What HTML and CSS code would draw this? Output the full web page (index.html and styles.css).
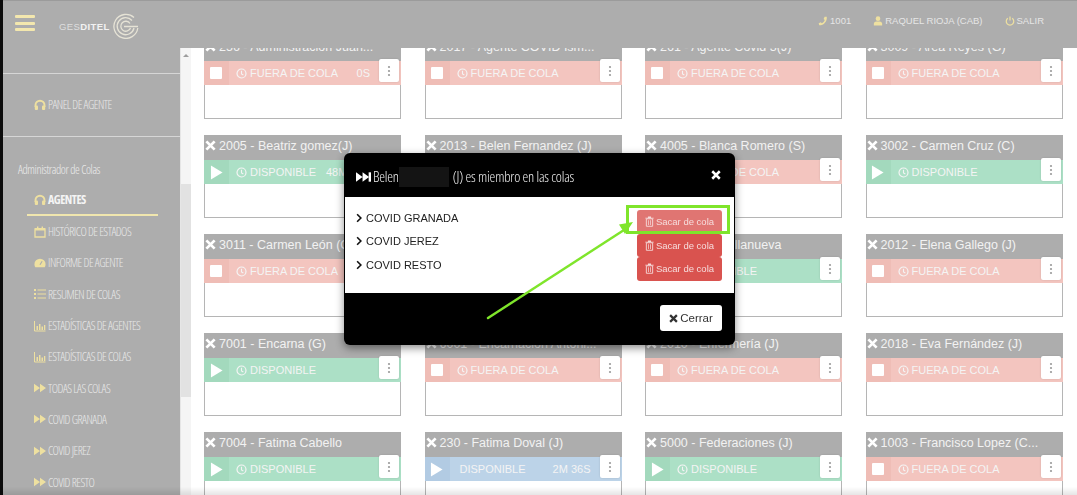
FILE: index.html
```html
<!DOCTYPE html>
<html lang="en">
<head>
  <meta charset="UTF-8">
  <meta name="viewport" content="width=device-width, initial-scale=1">
  <title>Gesditel - Agentes</title>
  <link rel="stylesheet" href="styles.css">
</head>
<body>
  <!-- Icons -->
  <svg class="sprite" width="0" height="0">
    <symbol id="i-x" viewBox="0 0 12 12"><path d="M1.500 1.500l9 9M10.500 1.500l-9 9" fill="none" stroke="currentColor" stroke-width="3"/></symbol>
    <symbol id="i-play" viewBox="0 0 14 16"><path d="M1 0.500L13.500 8 1 15.500z" fill="currentColor"/></symbol>
    <symbol id="i-stop" viewBox="0 0 12 12"><rect width="12" height="12" rx="1" fill="currentColor"/></symbol>
    <symbol id="i-clock" viewBox="0 0 12 12"><circle cx="6" cy="6" r="4.900" fill="none" stroke="currentColor" stroke-width="1.300"/><path d="M6 3v3.400l2 1.200" fill="none" stroke="currentColor" stroke-width="1.200"/></symbol>
    <symbol id="i-dots" viewBox="0 0 4 12"><circle cx="2" cy="2" r="1.100" fill="currentColor"/><circle cx="2" cy="6" r="1.100" fill="currentColor"/><circle cx="2" cy="10" r="1.100" fill="currentColor"/></symbol>
    <symbol id="i-head" viewBox="0 0 12 12"><path d="M1.500 8V6.200a4.500 4.500 0 0 1 9 0V8" fill="none" stroke="currentColor" stroke-width="1.900"/><rect x="0.800" y="6.600" width="3.200" height="4.400" rx="1" fill="currentColor"/><rect x="8" y="6.600" width="3.200" height="4.400" rx="1" fill="currentColor"/></symbol>
    <symbol id="i-cal" viewBox="0 0 12 12"><path d="M1 3h10v8H1z" fill="none" stroke="currentColor" stroke-width="1.300"/><path d="M1 2h10v2.500H1zM3 .5h1.400V2H3zM7.600 .5H9V2H7.600z" fill="currentColor"/></symbol>
    <symbol id="i-gauge" viewBox="0 0 14 12"><path d="M7 1a6.500 6.500 0 0 0-6.500 6.500c0 1.400.4 2.600 1 3.500h11c.6-.9 1-2.100 1-3.500A6.500 6.500 0 0 0 7 1z" fill="currentColor"/><path d="M7 8l2.500-4" stroke="#adadad" stroke-width="1.300"/></symbol>
    <symbol id="i-list" viewBox="0 0 12 12"><path d="M0 1h2v2H0zM0 5h2v2H0zM0 9h2v2H0z" fill="currentColor"/><path d="M3.500 1.400H12v1.200H3.500zM3.500 5.400H12v1.200H3.500zM3.500 9.400H12v1.200H3.500z" fill="currentColor"/></symbol>
    <symbol id="i-chart" viewBox="0 0 12 12"><path d="M.5 1v10h11" fill="none" stroke="currentColor" stroke-width="1"/><path d="M2.500 6h1.500v4H2.500zM5 4h1.500v6H5zM7.500 6.500H9V10H7.500zM10 5h1.300v5H10z" fill="currentColor"/></symbol>
    <symbol id="i-ff" viewBox="0 0 14 10"><path d="M0 0l7 5-7 5zM7 0l7 5-7 5z" fill="currentColor"/></symbol>
    <symbol id="i-next" viewBox="0 0 16 10"><path d="M0 0l7 5-7 5zM7 0l7 5-7 5z" fill="currentColor"/><path d="M13.500 0H16v10h-2.500z" fill="currentColor"/></symbol>
    <symbol id="i-phone" viewBox="0 0 12 12"><path d="M10.500 .8c.8 5.500-3.500 10.400-9 10.400L.8 8.800l2.600-1.300 1.100 1.300c1.600-.8 3-2.400 3.600-4L6.700 3.600 8 1z" fill="currentColor"/></symbol>
    <symbol id="i-user" viewBox="0 0 12 12"><circle cx="6" cy="3.200" r="2.800" fill="currentColor"/><path d="M1 11.500V9a3 3 0 0 1 3-2.500h4A3 3 0 0 1 11 9v2.500z" fill="currentColor"/></symbol>
    <symbol id="i-power" viewBox="0 0 12 12"><path d="M3.400 2.800a4.500 4.500 0 1 0 5.200 0" fill="none" stroke="currentColor" stroke-width="1.500"/><path d="M6 .5v5" stroke="currentColor" stroke-width="1.500"/></symbol>
    <symbol id="i-trash" viewBox="0 0 10 12"><path d="M1.500 3h7v8.300h-7z" fill="none" stroke="currentColor" stroke-width="1"/><path d="M.3 1.800h9.400v1H.3zM3.300.5h3.400v1.300H3.300zM3.500 4.500h.8v5.300h-.8zM5.700 4.500h.8v5.300h-.8z" fill="currentColor"/></symbol>
    <symbol id="i-chev" viewBox="0 0 8 12"><path d="M1.500 1l5 5-5 5" fill="none" stroke="currentColor" stroke-width="2.200"/></symbol>
  </svg>

  <header class="topbar">
    <div class="menu-btn"><span></span><span></span><span></span></div>
    <div class="logo">
      <span class="logo-text">GES<b>DITEL</b></span>
      <svg class="logo-mark" viewBox="0 0 26 26" width="26" height="26">
        <path d="M21 4.500A12 12 0 1 0 24.800 15" fill="none" stroke="#e6e3d6" stroke-width="1.300"/>
        <path d="M19 7.500A8.500 8.500 0 1 0 21 15" fill="none" stroke="#e6e3d6" stroke-width="1.300"/>
        <path d="M17 10.500A5 5 0 1 0 17.500 15M11 13.500h14" fill="none" stroke="#e6e3d6" stroke-width="1.300"/>
      </svg>
    </div>
    <nav class="user-nav">
      <span><svg class="icon"><use href="#i-phone"/></svg>1001</span>
      <span><svg class="icon"><use href="#i-user"/></svg>RAQUEL RIOJA (CAB)</span>
      <span><svg class="icon"><use href="#i-power"/></svg>SALIR</span>
    </nav>
  </header>

  <div class="layout">
    <aside class="sidebar">
      <div class="side-block">
        <a class="side-link"><svg class="icon"><use href="#i-head"/></svg>PANEL DE AGENTE</a>
      </div>
      <div class="side-title">Administrador de Colas</div>
      <a class="side-link active"><svg class="icon"><use href="#i-head"/></svg>AGENTES</a>
      <a class="side-link"><svg class="icon"><use href="#i-cal"/></svg>HISTÓRICO DE ESTADOS</a>
      <a class="side-link"><svg class="icon"><use href="#i-gauge"/></svg>INFORME DE AGENTE</a>
      <a class="side-link"><svg class="icon"><use href="#i-list"/></svg>RESUMEN DE COLAS</a>
      <a class="side-link"><svg class="icon"><use href="#i-chart"/></svg>ESTADÍSTICAS DE AGENTES</a>
      <a class="side-link"><svg class="icon"><use href="#i-chart"/></svg>ESTADÍSTICAS DE COLAS</a>
      <a class="side-link"><svg class="icon"><use href="#i-ff"/></svg>TODAS LAS COLAS</a>
      <a class="side-link"><svg class="icon"><use href="#i-ff"/></svg>COVID GRANADA</a>
      <a class="side-link"><svg class="icon"><use href="#i-ff"/></svg>COVID JEREZ</a>
      <a class="side-link"><svg class="icon"><use href="#i-ff"/></svg>COVID RESTO</a>
    </aside>

    <div class="scrollbar"><span class="scroll-arrow"></span><span class="scroll-thumb"></span></div>

    <main class="content">
      <div class="agents">

        <div class="card">
          <div class="card-title"><svg class="x"><use href="#i-x"/></svg>256 - Administracion Juan...</div>
          <div class="status out"><span class="st-btn"><svg class="st-stop"><use href="#i-stop"/></svg></span><span class="st-label"><svg class="clock"><use href="#i-clock"/></svg>FUERA DE COLA</span><span class="st-time">0S</span><span class="dots"><svg><use href="#i-dots"/></svg></span></div>
        </div>
        <div class="card">
          <div class="card-title"><svg class="x"><use href="#i-x"/></svg>2017 - Agente COVID Ism...</div>
          <div class="status out"><span class="st-btn"><svg class="st-stop"><use href="#i-stop"/></svg></span><span class="st-label"><svg class="clock"><use href="#i-clock"/></svg>FUERA DE COLA</span><span class="dots"><svg><use href="#i-dots"/></svg></span></div>
        </div>
        <div class="card">
          <div class="card-title"><svg class="x"><use href="#i-x"/></svg>261 - Agente Covid 3(J)</div>
          <div class="status out"><span class="st-btn"><svg class="st-stop"><use href="#i-stop"/></svg></span><span class="st-label"><svg class="clock"><use href="#i-clock"/></svg>FUERA DE COLA</span><span class="dots"><svg><use href="#i-dots"/></svg></span></div>
        </div>
        <div class="card">
          <div class="card-title"><svg class="x"><use href="#i-x"/></svg>3009 - Area Reyes (G)</div>
          <div class="status out"><span class="st-btn"><svg class="st-stop"><use href="#i-stop"/></svg></span><span class="st-label"><svg class="clock"><use href="#i-clock"/></svg>FUERA DE COLA</span><span class="dots"><svg><use href="#i-dots"/></svg></span></div>
        </div>

        <div class="card">
          <div class="card-title"><svg class="x"><use href="#i-x"/></svg>2005 - Beatriz gomez(J)</div>
          <div class="status free"><span class="st-btn"><svg class="st-play"><use href="#i-play"/></svg></span><span class="st-label"><svg class="clock"><use href="#i-clock"/></svg>DISPONIBLE</span><span class="st-time">48M 12S</span><span class="dots"><svg><use href="#i-dots"/></svg></span></div>
        </div>
        <div class="card">
          <div class="card-title"><svg class="x"><use href="#i-x"/></svg>2013 - Belen Fernandez (J)</div>
          <div class="status out"><span class="st-btn"><svg class="st-stop"><use href="#i-stop"/></svg></span><span class="st-label"><svg class="clock"><use href="#i-clock"/></svg>FUERA DE COLA</span><span class="dots"><svg><use href="#i-dots"/></svg></span></div>
        </div>
        <div class="card">
          <div class="card-title"><svg class="x"><use href="#i-x"/></svg>4005 - Blanca Romero (S)</div>
          <div class="status out"><span class="st-btn"><svg class="st-stop"><use href="#i-stop"/></svg></span><span class="st-label"><svg class="clock"><use href="#i-clock"/></svg>FUERA DE COLA</span><span class="dots"><svg><use href="#i-dots"/></svg></span></div>
        </div>
        <div class="card">
          <div class="card-title"><svg class="x"><use href="#i-x"/></svg>3002 - Carmen Cruz (C)</div>
          <div class="status free"><span class="st-btn"><svg class="st-play"><use href="#i-play"/></svg></span><span class="st-label"><svg class="clock"><use href="#i-clock"/></svg>DISPONIBLE</span><span class="dots"><svg><use href="#i-dots"/></svg></span></div>
        </div>

        <div class="card">
          <div class="card-title"><svg class="x"><use href="#i-x"/></svg>3011 - Carmen León (C)</div>
          <div class="status out"><span class="st-btn"><svg class="st-stop"><use href="#i-stop"/></svg></span><span class="st-label"><svg class="clock"><use href="#i-clock"/></svg>FUERA DE COLA</span><span class="dots"><svg><use href="#i-dots"/></svg></span></div>
        </div>
        <div class="card">
          <div class="card-title"><svg class="x"><use href="#i-x"/></svg>2014 - Carolina Ruiz (J)</div>
          <div class="status out"><span class="st-btn"><svg class="st-stop"><use href="#i-stop"/></svg></span><span class="st-label"><svg class="clock"><use href="#i-clock"/></svg>FUERA DE COLA</span><span class="dots"><svg><use href="#i-dots"/></svg></span></div>
        </div>
        <div class="card">
          <div class="card-title"><svg class="x"><use href="#i-x"/></svg>4010 - Eva Villanueva</div>
          <div class="status free"><span class="st-btn"><svg class="st-play"><use href="#i-play"/></svg></span><span class="st-label"><svg class="clock"><use href="#i-clock"/></svg>DISPONIBLE</span><span class="dots"><svg><use href="#i-dots"/></svg></span></div>
        </div>
        <div class="card">
          <div class="card-title"><svg class="x"><use href="#i-x"/></svg>2012 - Elena Gallego (J)</div>
          <div class="status out"><span class="st-btn"><svg class="st-stop"><use href="#i-stop"/></svg></span><span class="st-label"><svg class="clock"><use href="#i-clock"/></svg>FUERA DE COLA</span><span class="dots"><svg><use href="#i-dots"/></svg></span></div>
        </div>

        <div class="card">
          <div class="card-title"><svg class="x"><use href="#i-x"/></svg>7001 - Encarna (G)</div>
          <div class="status free"><span class="st-btn"><svg class="st-play"><use href="#i-play"/></svg></span><span class="st-label"><svg class="clock"><use href="#i-clock"/></svg>DISPONIBLE</span><span class="dots"><svg><use href="#i-dots"/></svg></span></div>
        </div>
        <div class="card">
          <div class="card-title"><svg class="x"><use href="#i-x"/></svg>6001 - Encarnación Antoni...</div>
          <div class="status out"><span class="st-btn"><svg class="st-stop"><use href="#i-stop"/></svg></span><span class="st-label"><svg class="clock"><use href="#i-clock"/></svg>FUERA DE COLA</span><span class="dots"><svg><use href="#i-dots"/></svg></span></div>
        </div>
        <div class="card">
          <div class="card-title"><svg class="x"><use href="#i-x"/></svg>2010 - Enfermería (J)</div>
          <div class="status out"><span class="st-btn"><svg class="st-stop"><use href="#i-stop"/></svg></span><span class="st-label"><svg class="clock"><use href="#i-clock"/></svg>FUERA DE COLA</span><span class="dots"><svg><use href="#i-dots"/></svg></span></div>
        </div>
        <div class="card">
          <div class="card-title"><svg class="x"><use href="#i-x"/></svg>2018 - Eva Fernández (J)</div>
          <div class="status out"><span class="st-btn"><svg class="st-stop"><use href="#i-stop"/></svg></span><span class="st-label"><svg class="clock"><use href="#i-clock"/></svg>FUERA DE COLA</span><span class="dots"><svg><use href="#i-dots"/></svg></span></div>
        </div>

        <div class="card">
          <div class="card-title"><svg class="x"><use href="#i-x"/></svg>7004 - Fatima Cabello</div>
          <div class="status free"><span class="st-btn"><svg class="st-play"><use href="#i-play"/></svg></span><span class="st-label"><svg class="clock"><use href="#i-clock"/></svg>DISPONIBLE</span><span class="dots"><svg><use href="#i-dots"/></svg></span></div>
        </div>
        <div class="card">
          <div class="card-title"><svg class="x"><use href="#i-x"/></svg>230 - Fatima Doval (J)</div>
          <div class="status busy"><span class="st-btn"><svg class="st-play"><use href="#i-play"/></svg></span><span class="st-label no-clock">DISPONIBLE</span><span class="st-time">2M 36S</span><span class="dots"><svg><use href="#i-dots"/></svg></span></div>
        </div>
        <div class="card">
          <div class="card-title"><svg class="x"><use href="#i-x"/></svg>5000 - Federaciones (J)</div>
          <div class="status free"><span class="st-btn"><svg class="st-play"><use href="#i-play"/></svg></span><span class="st-label"><svg class="clock"><use href="#i-clock"/></svg>DISPONIBLE</span><span class="dots"><svg><use href="#i-dots"/></svg></span></div>
        </div>
        <div class="card">
          <div class="card-title"><svg class="x"><use href="#i-x"/></svg>1003 - Francisco Lopez (C...</div>
          <div class="status out"><span class="st-btn"><svg class="st-stop"><use href="#i-stop"/></svg></span><span class="st-label"><svg class="clock"><use href="#i-clock"/></svg>FUERA DE COLA</span><span class="dots"><svg><use href="#i-dots"/></svg></span></div>
        </div>

      </div>
    </main>
  </div>
  <div class="bottom-fade"></div>

  <!-- Queue modal -->
  <div class="modal">
    <div class="modal-head">
      <svg class="next"><use href="#i-next"/></svg>
      <h4>Belen<span class="censor"></span>(J) es miembro en las colas</h4>
      <svg class="modal-close"><use href="#i-x"/></svg>
    </div>
    <div class="modal-body">
      <ul class="queues">
        <li><svg class="chev"><use href="#i-chev"/></svg>COVID GRANADA</li>
        <li><svg class="chev"><use href="#i-chev"/></svg>COVID JEREZ</li>
        <li><svg class="chev"><use href="#i-chev"/></svg>COVID RESTO</li>
      </ul>
      <div class="queue-actions">
        <button class="btn-remove hover"><svg class="trash"><use href="#i-trash"/></svg>Sacar de cola</button>
        <button class="btn-remove"><svg class="trash"><use href="#i-trash"/></svg>Sacar de cola</button>
        <button class="btn-remove"><svg class="trash"><use href="#i-trash"/></svg>Sacar de cola</button>
      </div>
    </div>
    <div class="modal-foot">
      <button class="btn-close"><svg class="x-dark"><use href="#i-x"/></svg>Cerrar</button>
    </div>
  </div>

  <!-- Annotation on top of the screenshot -->
  <div class="mark-box"></div>
  <svg class="mark-arrow" width="160" height="110" viewBox="0 0 160 110">
    <path d="M3 102L139 14" fill="none" stroke="#7fe52b" stroke-width="2.5" stroke-linecap="round"/>
    <path d="M148 6l-14 2.500 6 9.500z" fill="#7fe52b"/>
  </svg>
</body>
</html>
```

FILE: styles.css
```css
* {
  box-sizing: border-box;
}
body {
  margin: 0;
  height: 495px;
  overflow: hidden;
  font-family: "Liberation Sans", Arial, sans-serif;
  background: #fff;
  border-left: 3px solid #0b0b0b;
  color: #fff;
}
.sprite {
  display: block;
  position: absolute;
}
.icon {
  width: 12px;
  height: 12px;
  color: #eee0a0;
  flex: none;
}

/* Top bar */
.topbar {
  height: 48px;
  display: flex;
  align-items: center;
  background: #adadad;
  border-top: 1px solid #9b9b9b;
  position: relative;
  z-index: 2;
}
.menu-btn {
  width: 20px;
  margin-left: 12px;
  display: flex;
  flex-direction: column;
  gap: 3.5px;
  margin-top: -3px;
}
.menu-btn span {
  height: 3px;
  background: #f3e7ae;
  border-radius: 1px;
}
.logo {
  display: flex;
  align-items: center;
  margin-left: 24px;
  margin-top: 3px;
}
.logo-text {
  font-size: 9.5px;
  letter-spacing: 0.4px;
  color: #dedede;
}
.logo-text b {
  color: #f2f2f2;
}
.logo-mark {
  margin-left: 3px;
}
.user-nav {
  margin-left: auto;
  margin-right: 33px;
  margin-top: -8px;
  display: flex;
  gap: 22px;
  font-size: 9.5px;
  color: #e6e6e6;
}
.user-nav span {
  display: flex;
  align-items: center;
  gap: 2px;
}
.user-nav .icon {
  width: 10px;
  height: 10px;
}

/* Sidebar */
.layout {
  display: flex;
  height: 447px;
}
.sidebar {
  width: 177px;
  background: #adadad;
  padding-top: 25px;
  font-family: "Open Sans", "Liberation Sans", sans-serif;
  font-stretch: 75%;
  font-weight: 300;
  letter-spacing: -0.5px;
  flex: none;
  overflow: hidden;
}
.side-block {
  border-top: 1px solid #d6d6d6;
  border-bottom: 1px solid #d6d6d6;
  height: 64px;
  padding: 23px 0 0 0;
  margin-bottom: 24px;
}
.side-title {
  font-size: 12px;
  letter-spacing: -0.4px;
  color: #ececec;
  margin-left: 15px;
  height: 24px;
}
.side-link {
  display: flex;
  align-items: center;
  gap: 2px;
  height: 31.3px;
  padding-left: 31px;
  font-size: 12px;
  color: #e8e8e8;
  white-space: nowrap;
}
.side-block .side-link {
  height: 15px;
}
.side-link.active {
  font-weight: bold;
  color: #f4f4f4;
  margin-left: 24px;
  padding-left: 7px;
  width: 131px;
  border-bottom: 2px solid #f0e6ae;
  height: 31px;
}

/* Scrollbar */
.scrollbar {
  width: 11px;
  flex: none;
  background: #f5f5f5;
  border-left: 1px solid #e6e6e6;
  position: relative;
}
.scroll-arrow {
  display: block;
  margin: 6px auto 0;
  width: 0;
  border: 3px solid transparent;
  border-top: 0;
  border-bottom: 3px solid #9d9d9d;
}
.scroll-thumb {
  display: block;
  height: 213px;
  margin-top: 127px;
  background: #e2e2e2;
}

/* Agent cards */
.content {
  flex: 1;
  overflow: hidden;
  padding-left: 13px;
}
.agents {
  display: grid;
  grid-template-columns: repeat(4, 197px);
  column-gap: 23.5px;
  row-gap: 16px;
  margin-top: -12px;
}
.card {
  height: 83px;
  border: 1px solid #b5b5b5;
  border-top: 0;
  background: #fff;
}
.card-title {
  height: 25px;
  margin: 0 -1px;
  background: #adadad;
  color: #f2f2f2;
  font-size: 12.5px;
  line-height: 22px;
  padding-left: 1px;
  white-space: nowrap;
  overflow: hidden;
}
.x {
  width: 11px;
  height: 11px;
  margin-right: 3px;
  color: #fff;
  vertical-align: -1px;
}
.status {
  height: 24px;
  display: flex;
  align-items: center;
  position: relative;
  font-size: 11px;
  color: #f4f4f4;
  margin: 0 -1px;
  padding-right: 31px;
}
.status.out {
  background: #f3c5bf;
}
.status.free {
  background: #ace0c6;
}
.status.busy {
  background: #bcd3e8;
}
.st-btn {
  width: 25px;
  height: 24px;
  display: flex;
  align-items: center;
  justify-content: center;
  flex: none;
}
.out .st-btn {
  background: #efbdb6;
}
.free .st-btn {
  background: #a3d9bd;
}
.busy .st-btn {
  background: #b2cbe3;
}
.st-stop {
  width: 12px;
  height: 12px;
  color: #fff;
  margin-left: -1px;
}
.st-play {
  width: 13px;
  height: 15px;
  color: #fff;
  margin-left: -1px;
}
.st-label {
  display: flex;
  align-items: center;
  gap: 3px;
  margin-left: 7px;
  white-space: nowrap;
}
.st-label.no-clock {
  margin-left: 10px;
}
.clock {
  width: 11px;
  height: 11px;
}
.st-time {
  margin-left: auto;
  white-space: nowrap;
}
.dots {
  position: absolute;
  right: 2px;
  top: -2px;
  width: 20px;
  height: 23px;
  background: #fff;
  border-radius: 2px;
  display: flex;
  align-items: center;
  justify-content: center;
  color: #9a9a9a;
  box-shadow: 0 0 2px rgba(0, 0, 0, 0.15);
}
.dots svg {
  width: 4px;
  height: 12px;
}
.bottom-fade {
  position: fixed;
  left: 0;
  right: 0;
  bottom: 0;
  height: 8px;
  background: linear-gradient(rgba(0, 0, 0, 0), rgba(0, 0, 0, 0.1));
  z-index: 3;
}

/* Modal */
.modal {
  position: fixed;
  left: 344px;
  top: 153px;
  width: 391px;
  height: 192px;
  background: #000;
  border-radius: 6px;
  box-shadow: 0 3px 8px rgba(0, 0, 0, 0.45);
  z-index: 5;
  display: flex;
  flex-direction: column;
  padding: 0 1px;
}
.modal-head {
  height: 44px;
  display: flex;
  align-items: center;
  padding: 3px 13px 0 11px;
  flex: none;
}
.modal-head h4 {
  margin: 0;
  font-family: "Open Sans", "Liberation Sans", sans-serif;
  font-stretch: 75%;
  font-weight: 300;
  letter-spacing: -0.2px;
  font-size: 14.5px;
  color: #f0f0f0;
  display: flex;
  align-items: center;
  flex: 1;
}
.next {
  width: 15px;
  height: 10px;
  margin-right: 2px;
  color: #fff;
}
.censor {
  width: 50px;
  height: 20px;
  margin: 0 4px 0 0;
  background: #141414;
}
.modal-close {
  width: 10px;
  height: 10px;
  color: #fff;
  margin-top: -3px;
}
.modal-body {
  height: 96px;
  background: #fff;
  display: flex;
  justify-content: space-between;
  padding: 9px 12px 0 11px;
  flex: none;
}
.queues {
  list-style: none;
  margin: 0;
  padding: 0;
  color: #222;
  font-size: 11px;
}
.queues li {
  height: 23.5px;
  display: flex;
  align-items: center;
  gap: 4px;
}
.chev {
  width: 6px;
  height: 10px;
  color: #111;
}
.queue-actions {
  display: flex;
  flex-direction: column;
  margin-top: 4px;
}
.btn-remove {
  width: 85px;
  height: 23.5px;
  padding: 0;
  border: 0;
  border-radius: 3px;
  background: #d9534f;
  color: #f6dcdc;
  font-family: "Liberation Sans", sans-serif;
  font-size: 9.5px;
  display: flex;
  align-items: center;
  justify-content: center;
  gap: 2px;
}
.btn-remove.hover {
  background: #e07572;
}
.trash {
  width: 9px;
  height: 11px;
}
.modal-foot {
  flex: 1;
  display: flex;
  justify-content: flex-end;
  padding: 12px 12px 0 0;
}
.btn-close {
  width: 62px;
  height: 26px;
  border: 0;
  border-radius: 3px;
  background: #fff;
  color: #333;
  font-family: "Liberation Sans", sans-serif;
  font-size: 11.5px;
  display: flex;
  align-items: center;
  justify-content: center;
  gap: 2px;
  padding: 0;
}
.x-dark {
  width: 9px;
  height: 9px;
}

/* Green annotation */
.mark-box {
  position: fixed;
  left: 626px;
  top: 205px;
  width: 104px;
  height: 29px;
  border: 3px solid #7fe52b;
  z-index: 6;
}
.mark-arrow {
  position: fixed;
  left: 485px;
  top: 216px;
  z-index: 7;
}
```
